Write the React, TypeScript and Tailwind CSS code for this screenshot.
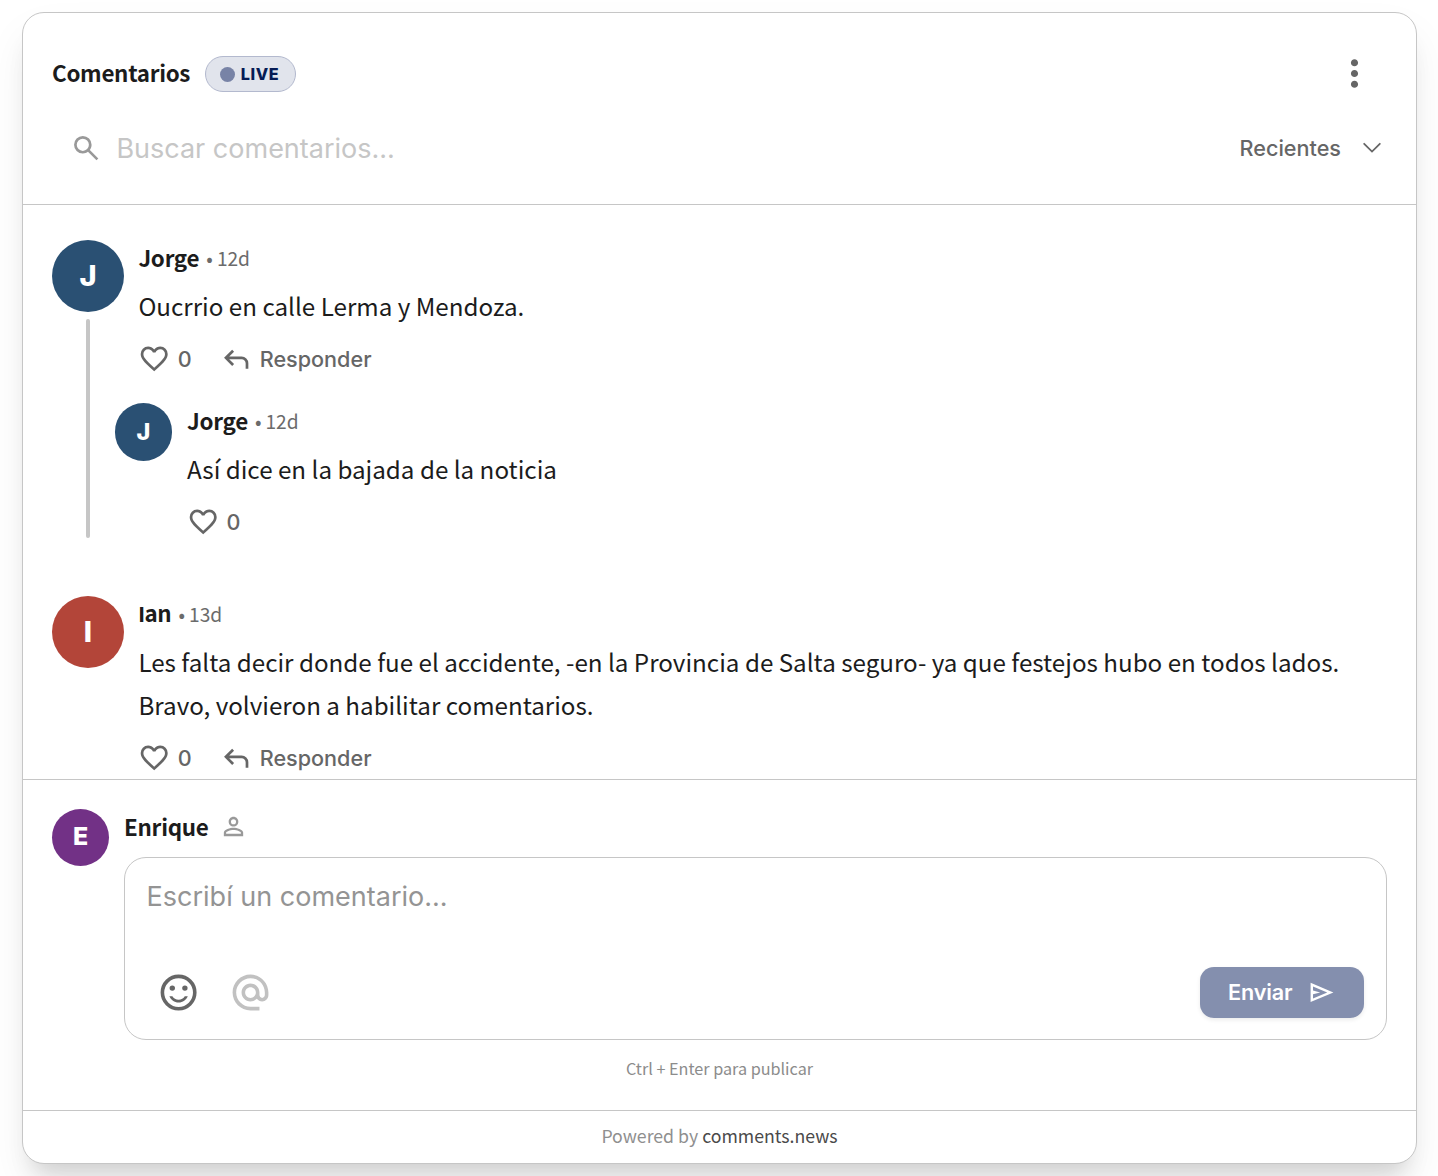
import type { ReactNode } from 'react'
import { MdAlternateEmail, MdMoreVert, MdPersonOutline } from 'react-icons/md'

const HeartIcon = () => (
  <svg
    className="size-[32.4px]"
    viewBox="0 -960 960 960"
    fill="currentColor"
  >
    <path d="m480-120-58-52q-101-91-167-157T150-447.5Q111-500 95.5-544T80-634q0-94 63-157t157-63q52 0 99 22t81 62q34-40 81-62t99-22q94 0 157 63t63 157q0 46-15.5 90T810-447.5Q771-395 705-329T538-172l-58 52Zm0-108q96-86 158-147.5t98-107q36-45.5 50-81t14-70.5q0-60-40-100t-100-40q-47 0-87 26.5T518-680h-76q-15-41-55-67.5T300-774q-60 0-100 40t-40 100q0 35 14 70.5t50 81q36 45.5 98 107T480-228Z" />
  </svg>
)

const ReplyIcon = () => (
  <svg
    className="size-[32.4px]"
    viewBox="0 -960 960 960"
    fill="currentColor"
  >
    <path d="M760-200v-160q0-50-35-85t-85-35H273l144 144-57 56-240-240 240-240 57 56-144 144h367q83 0 141.5 58.5T840-360v160h-80Z" />
  </svg>
)

const SearchIcon = () => (
  <svg
    className="size-[32.4px]"
    viewBox="0 -960 960 960"
    fill="currentColor"
  >
    <path d="M784-120 532-372q-30 24-69 38t-83 14q-109 0-184.5-75.5T120-580q0-109 75.5-184.5T380-840q109 0 184.5 75.5T640-580q0 44-14 83t-38 69l252 252-56 56ZM380-400q75 0 127.5-52.5T560-580q0-75-52.5-127.5T380-760q-75 0-127.5 52.5T200-580q0 75 52.5 127.5T380-400Z" />
  </svg>
)

const SendIcon = () => (
  <svg
    className="size-[28.8px]"
    viewBox="0 -960 960 960"
    fill="currentColor"
  >
    <path d="M120-160v-640l760 320-760 320Zm80-120 474-200-474-200v140l240 60-240 60v140Z" />
  </svg>
)

const SmileIcon = () => (
  <svg className="size-[43.2px]" viewBox="0 0 24 24" fill="currentColor">
    <circle cx="15.5" cy="9.5" r="1.5" />
    <circle cx="8.5" cy="9.5" r="1.5" />
    <path d="M12 16c-1.48 0-2.75-.81-3.45-2H6.88c.8 2.05 2.79 3.5 5.12 3.5s4.32-1.45 5.12-3.5h-1.67c-.7 1.19-1.97 2-3.45 2z" />
    <circle
      cx="12"
      cy="12"
      r="9"
      fill="none"
      stroke="currentColor"
      strokeWidth="2"
    />
  </svg>
)

const Avatar = ({
  letter,
  className
}: {
  letter: string
  className: string
}) => (
  <div
    className={`flex shrink-0 items-center justify-center rounded-full pb-px font-['Inter',sans-serif] font-extrabold text-white ${className}`}
  >
    {letter}
  </div>
)

type CommentProps = {
  name: string
  nameClass?: string
  time: string
  reply?: boolean
  children: ReactNode
}

const CommentBody = ({
  name,
  nameClass = '',
  time,
  reply,
  children
}: CommentProps) => (
  <div className="flex flex-col">
    <div className="flex h-9 items-center">
      <span
        className={`text-[22.4px] font-bold tracking-[-0.25px] text-[#1c1c1c] ${nameClass}`}
      >
        {name}
      </span>
      <span className="ml-[7px] text-[19.2px] tracking-[-0.1px] text-[#6b6b6b]">
        • {time}
      </span>
    </div>
    <p className="mt-2 text-[24.2px] leading-[43px] text-[#1c1c1c]">
      {children}
    </p>
    <div className="mt-[15px] flex h-[34px] items-center font-['Inter',sans-serif] text-[21.6px] font-medium text-[#666]">
      <HeartIcon />
      <span className="ml-[7px]">0</span>
      {!reply && (
        <>
          <span className="ml-[28.6px]">
            <ReplyIcon />
          </span>
          <span className="ml-[7px]">Responder</span>
        </>
      )}
    </div>
  </div>
)

const Header = () => (
  <header className="flex h-[192px] shrink-0 flex-col border-b border-[#c6c6c6] px-[29px] pt-[43px]">
    <div className="flex h-9 items-center">
      <h2 className="pb-[2px] text-[22.4px] font-bold tracking-[-0.3px] text-[#1c1c1c]">
        Comentarios
      </h2>
      <span className="ml-[14.6px] flex h-9 w-[91px] items-center rounded-full border border-[#b3b9ce] bg-[#e1e4ec] pl-[14px] font-['Inter',sans-serif] text-[16.2px] font-extrabold tracking-[0.6px] text-[#051b55]">
        <i className="mr-[6px] size-[15px] rounded-full bg-[#7883a6]" />
        LIVE
      </span>
      <button className="mr-[11px] mb-[2px] ml-auto text-[#666]">
        <MdMoreVert size={43} />
      </button>
    </div>
    <div className="mt-[38px] flex h-9 items-center font-['Inter',sans-serif]">
      <span className="ml-[17.6px] text-[#999]">
        <SearchIcon />
      </span>
      <span className="ml-[14.4px] pt-[2px] text-[27px] text-[#c6c6c6]">
        Buscar comentarios...
      </span>
      <span className="ml-auto text-[21.6px] font-medium text-[#666]">
        Recientes
      </span>
      <svg
        className="mr-[6px] ml-[22px] text-[#666]"
        width="18"
        height="12"
        viewBox="0 0 18 12"
        fill="none"
      >
        <path
          d="M1.2 1.8L9 9.6L16.8 1.8"
          stroke="currentColor"
          strokeWidth="1.8"
          strokeLinecap="round"
        />
      </svg>
    </div>
  </header>
)

const CommentList = () => (
  <main className="flex h-[575px] shrink-0 flex-col overflow-hidden border-b border-[#c6c6c6] px-[29px] pt-[35px]">
    <article className="flex h-[356px] shrink-0">
      <div className="flex w-[72px] shrink-0 flex-col items-center">
        <Avatar letter="J" className="size-[72px] bg-[#2a5073] text-[29px]" />
        <div className="mt-[7px] h-[219px] w-1 rounded-full bg-[#c6c6c6]" />
      </div>
      <div>
        <div className="ml-[14.4px]">
          <CommentBody name="Jorge" time="12d">
            Oucrrio en calle Lerma y Mendoza.
          </CommentBody>
        </div>
        <div className="-ml-[9px] mt-[27px] flex">
          <Avatar
            letter="J"
            className="h-[58px] w-[57px] bg-[#2a5073] text-[23.5px]"
          />
          <div className="ml-[15px]">
            <CommentBody name="Jorge" time="12d" reply>
              Así dice en la bajada de la noticia
            </CommentBody>
          </div>
        </div>
      </div>
    </article>
    <article className="flex shrink-0">
      <Avatar letter="I" className="size-[72px] bg-[#b34539] text-[29px]" />
      <div className="ml-[14.4px]">
        <CommentBody
          name="Ian"
          nameClass="first-letter:font-['Liberation_Sans']"
          time="13d"
        >
          Les falta decir donde fue el accidente, -en la Provincia de Salta
          seguro- ya que festejos hubo en todos lados.
          <br />
          Bravo, volvieron a habilitar comentarios.
        </CommentBody>
      </div>
    </article>
  </main>
)

const Composer = () => (
  <section className="flex h-[331px] shrink-0 flex-col border-b border-[#c6c6c6] px-[29px] pt-[29px]">
    <div className="flex">
      <Avatar letter="E" className="size-[57px] bg-[#723186] text-[25px]" />
      <div className="ml-[15px] flex flex-1 flex-col">
        <div className="flex h-9 items-center">
          <span className="text-[22.4px] font-bold tracking-[-0.25px] text-[#1c1c1c]">
            Enrique
          </span>
          <MdPersonOutline
            className="mb-[2px] ml-[10px] text-[#999]"
            size={29}
          />
        </div>
        <div className="mt-3 flex h-[183px] flex-col rounded-[22px] border border-[#c6c6c6] pr-[22px] pb-[21px] pl-[21.6px] font-['Inter',sans-serif]">
          <span className="pt-[20px] text-[27px] leading-[38px] text-[#949494]">
            Escribí un comentario...
          </span>
          <div className="mt-auto flex h-[51px] items-center">
            <span className="ml-[10.8px] text-[#666]">
              <SmileIcon />
            </span>
            <MdAlternateEmail
              className="ml-[28.4px] text-[#c1c1c1]"
              size={43}
            />
            <button className="ml-auto flex h-[51px] w-[164px] items-center rounded-[14px] bg-[#848fae] pl-7 text-[21.6px] font-semibold tracking-[-0.15px] text-white shadow-[0_2px_4px_rgba(0,0,0,0.08)]">
              Enviar
              <span className="mb-px ml-[15px]">
                <SendIcon />
              </span>
            </button>
          </div>
        </div>
      </div>
    </div>
    <p className="mt-[15px] text-center text-[16.2px] leading-[27px] text-[#8c8c8c]">
      Ctrl + Enter para publicar
    </p>
  </section>
)

export default function App() {
  return (
    <div className="h-[1176px] overflow-hidden bg-white pt-3 pl-[22px] font-['Noto_Sans_CJK_JP',sans-serif]">
      <div className="flex h-[1152px] w-[1395px] flex-col rounded-[22px] border border-[#c6c6c6] bg-white shadow-[0_22px_44px_rgba(0,0,0,0.06),0_20px_24px_-12px_rgba(0,0,0,0.16)]">
        <Header />
        <CommentList />
        <Composer />
        <footer className="flex flex-1 items-center justify-center pb-[3px] text-[17.7px] text-[#8f8f8f]">
          Powered by
          <span className="ml-1 text-[#4a4a4a]">comments.news</span>
        </footer>
      </div>
    </div>
  )
}
